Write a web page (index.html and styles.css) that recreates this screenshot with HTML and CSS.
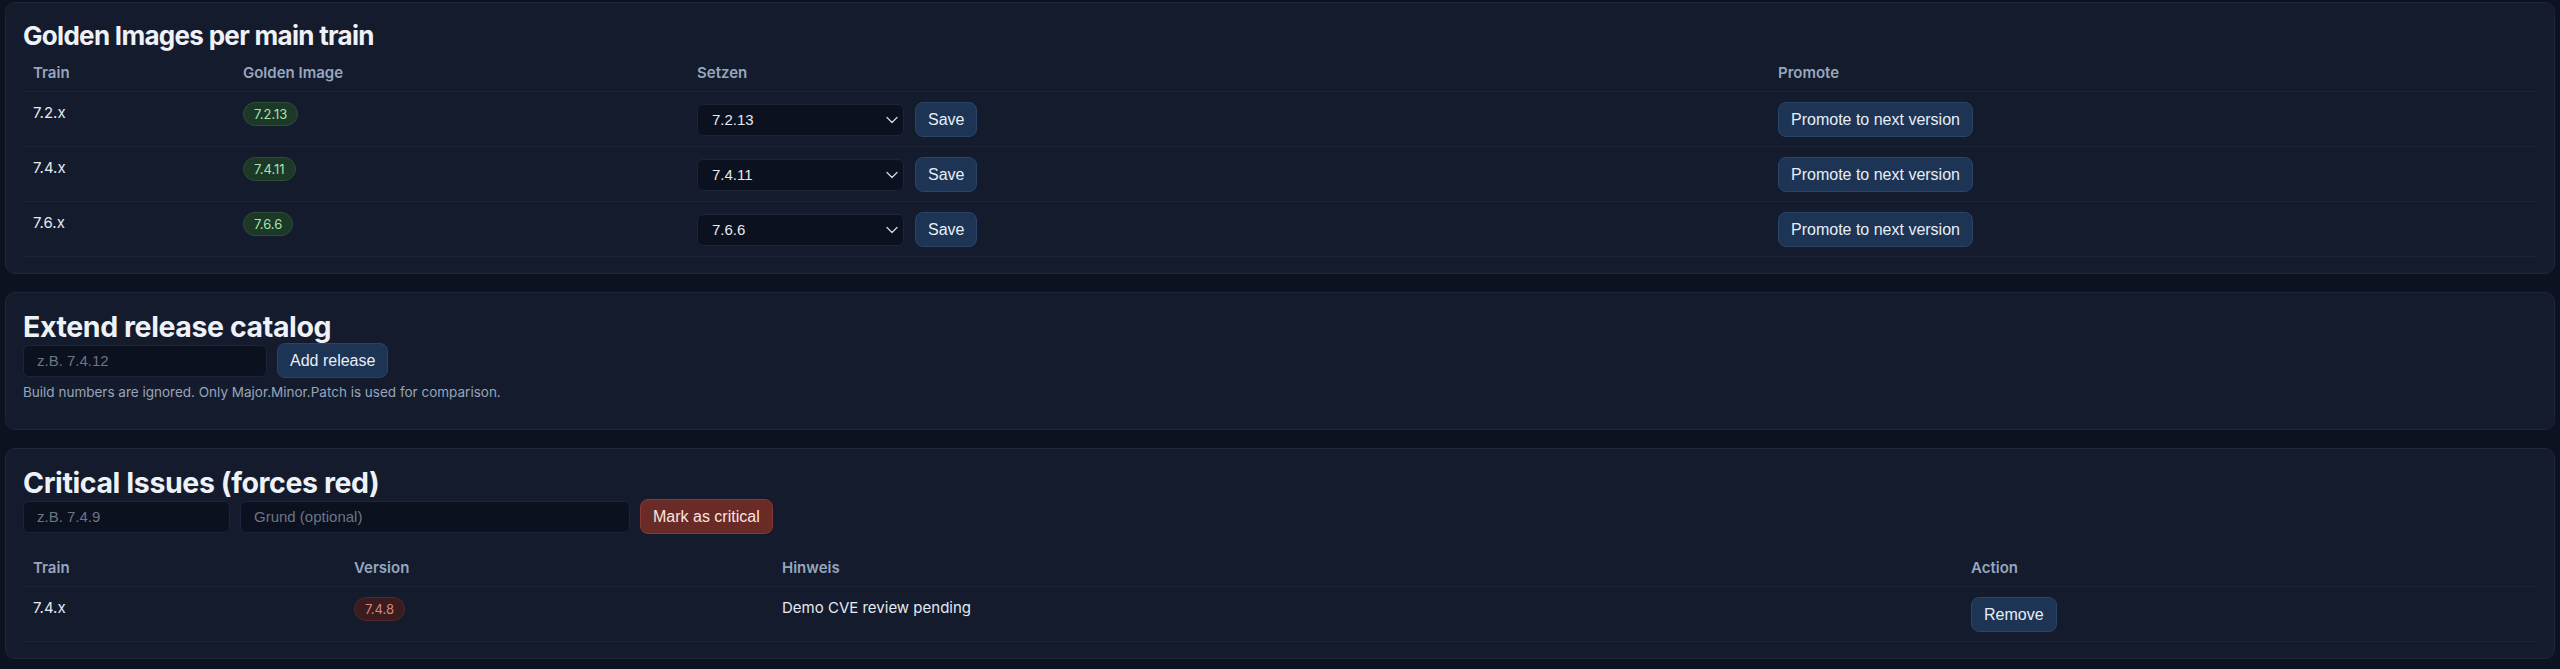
FILE: index.html
```html
<!DOCTYPE html>
<html lang="de">
<head>
<meta charset="utf-8">
<title>Release Management</title>
<link rel="stylesheet" href="styles.css">
</head>
<body>
<main class="page">
  <section class="card">
    <h2 class="card-title">Golden Images per main train</h2>
    <table class="tbl">
      <colgroup>
        <col class="c-g1"><col class="c-g2"><col class="c-g3"><col>
      </colgroup>
      <thead>
        <tr><th>Train</th><th>Golden Image</th><th>Setzen</th><th>Promote</th></tr>
      </thead>
      <tbody>
        <tr>
          <td>7.2.x</td>
          <td><span class="badge badge-ok">7.2.13</span></td>
          <td>
            <div class="set-row">
              <span class="select-wrap">
                <select class="select"><option>7.2.13</option><option>7.2.12</option></select>
                <svg class="chev" viewBox="0 0 12 8" width="12" height="8"><path d="M1 1.5 L6 6.5 L11 1.5" fill="none" stroke="currentColor" stroke-width="1.4" stroke-linecap="round" stroke-linejoin="round"/></svg>
              </span>
              <button class="btn">Save</button>
            </div>
          </td>
          <td><button class="btn">Promote to next version</button></td>
        </tr>
        <tr>
          <td>7.4.x</td>
          <td><span class="badge badge-ok">7.4.11</span></td>
          <td>
            <div class="set-row">
              <span class="select-wrap">
                <select class="select"><option>7.4.11</option><option>7.4.10</option></select>
                <svg class="chev" viewBox="0 0 12 8" width="12" height="8"><path d="M1 1.5 L6 6.5 L11 1.5" fill="none" stroke="currentColor" stroke-width="1.4" stroke-linecap="round" stroke-linejoin="round"/></svg>
              </span>
              <button class="btn">Save</button>
            </div>
          </td>
          <td><button class="btn">Promote to next version</button></td>
        </tr>
        <tr>
          <td>7.6.x</td>
          <td><span class="badge badge-ok">7.6.6</span></td>
          <td>
            <div class="set-row">
              <span class="select-wrap">
                <select class="select"><option>7.6.6</option><option>7.6.5</option></select>
                <svg class="chev" viewBox="0 0 12 8" width="12" height="8"><path d="M1 1.5 L6 6.5 L11 1.5" fill="none" stroke="currentColor" stroke-width="1.4" stroke-linecap="round" stroke-linejoin="round"/></svg>
              </span>
              <button class="btn">Save</button>
            </div>
          </td>
          <td><button class="btn">Promote to next version</button></td>
        </tr>
      </tbody>
    </table>
  </section>

  <section class="card">
    <h2 class="card-title card-title-lg">Extend release catalog</h2>
    <div class="form-row">
      <input class="input input-release" type="text" placeholder="z.B. 7.4.12">
      <button class="btn">Add release</button>
    </div>
    <p class="help">Build numbers are ignored. Only Major.Minor.Patch is used for comparison.</p>
  </section>

  <section class="card">
    <h2 class="card-title card-title-lg">Critical Issues (forces red)</h2>
    <div class="form-row form-row-crit">
      <input class="input input-ver" type="text" placeholder="z.B. 7.4.9">
      <input class="input input-reason" type="text" placeholder="Grund (optional)">
      <button class="btn btn-danger">Mark as critical</button>
    </div>
    <table class="tbl">
      <colgroup>
        <col class="c-c1"><col class="c-c2"><col class="c-c3"><col>
      </colgroup>
      <thead>
        <tr><th>Train</th><th>Version</th><th>Hinweis</th><th>Action</th></tr>
      </thead>
      <tbody>
        <tr>
          <td>7.4.x</td>
          <td><span class="badge badge-bad">7.4.8</span></td>
          <td>Demo CVE review pending</td>
          <td><button class="btn">Remove</button></td>
        </tr>
      </tbody>
    </table>
  </section>
</main>
</body>
</html>
```

FILE: styles.css
```css
* { box-sizing: border-box; }

html, body {
  margin: 0;
  background: #0c1220;
}

body {
  font-family: "Inter", "Noto Sans", sans-serif;
  font-size: 15px;
  line-height: 22px;
  color: #e2e8f0;
}

.page {
  padding: 2px 5px 12px;
  display: flex;
  flex-direction: column;
  gap: 18px;
}

.card {
  background: #131b2d;
  border: 1px solid #1e283a;
  border-radius: 10px;
  padding: 17px 17px 16px;
}

.card-title {
  margin: 0;
  font-size: 26px;
  line-height: 31px;
  font-weight: 700;
  letter-spacing: -0.7px;
  color: #eef1f6;
}

.card-title-lg {
  font-size: 28.5px;
  line-height: 33px;
  letter-spacing: -0.4px;
}

.tbl {
  width: 100%;
  border-collapse: collapse;
  table-layout: fixed;
}

.c-g1 { width: 210px; }
.c-g2 { width: 454px; }
.c-g3 { width: 1081px; }

.c-c1 { width: 321px; }
.c-c2 { width: 428px; }
.c-c3 { width: 1189px; }

.tbl th {
  text-align: left;
  font-weight: 600;
  color: #97a6bd;
  padding: 11px 10px 7px;
  border-bottom: 1px solid #1b2536;
}

.tbl td {
  text-align: left;
  vertical-align: top;
  padding: 10px 10px 9px;
  border-bottom: 1px solid #1b2536;
  color: #e5e9f0;
}

.badge {
  display: inline-block;
  font-size: 13px;
  line-height: 16px;
  padding: 3px 10px;
  border-radius: 999px;
  border: 1px solid;
}

.badge-ok {
  background: #1c3826;
  border-color: #2b4d36;
  color: #a6e3b1;
}

.badge-bad {
  background: #3a1b1e;
  border-color: #55272a;
  color: #d7857d;
}

.set-row {
  display: flex;
  align-items: center;
  gap: 11px;
}

.select-wrap {
  position: relative;
  display: inline-block;
  color: #c9d2de;
}

.select {
  appearance: none;
  -webkit-appearance: none;
  width: 207px;
  height: 32px;
  padding: 0 30px 0 14px;
  background: #0b111e;
  border: 1px solid #1c2537;
  border-radius: 6px;
  color: #e5e9f0;
  font-family: "Liberation Sans", Arial, sans-serif;
  font-size: 15px;
}

.chev {
  position: absolute;
  right: 6px;
  top: 12px;
  pointer-events: none;
}

.btn {
  font-family: "Liberation Sans", Arial, sans-serif;
  font-size: 16px;
  line-height: 17px;
  padding: 8px 12px;
  background: #1d3455;
  border: 1px solid #284469;
  border-radius: 8px;
  color: #e8eef6;
  cursor: pointer;
  white-space: nowrap;
}

.btn-danger {
  background: #6a2a26;
  border-color: #833a34;
  color: #fbe5e2;
}

.form-row {
  display: flex;
  align-items: center;
  gap: 10px;
}

.form-row-crit {
  margin-bottom: 12px;
}

.input {
  height: 32px;
  padding: 0 13px;
  background: #0b111e;
  border: 1px solid #1c2537;
  border-radius: 6px;
  color: #e5e9f0;
  font-family: "Liberation Sans", Arial, sans-serif;
  font-size: 15px;
}

.input::placeholder {
  color: #6b7587;
}

.input-release { width: 244px; }
.input-ver { width: 207px; }
.input-reason { width: 390px; }

.help {
  margin: 5px 0 12px;
  font-size: 13.5px;
  line-height: 18px;
  color: #98a5b8;
}
```
